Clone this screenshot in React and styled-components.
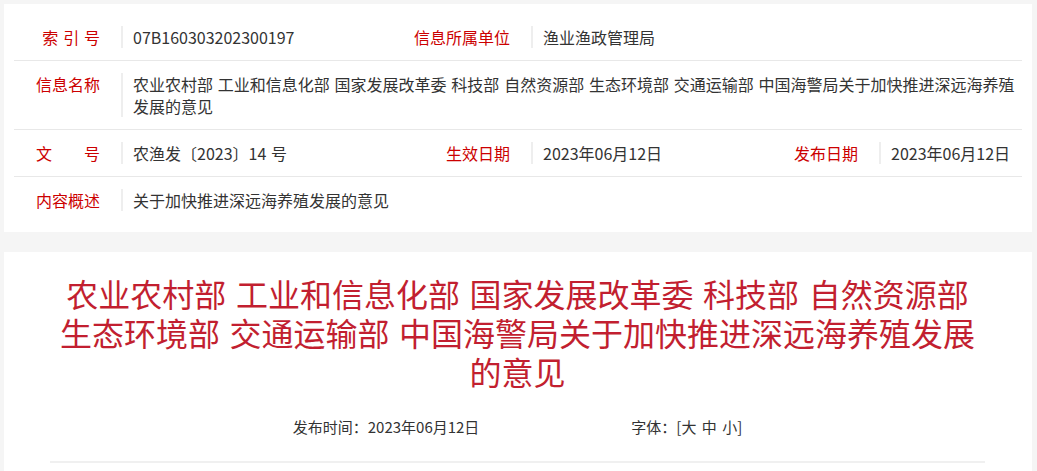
import React from 'react';
import styled, { createGlobalStyle } from 'styled-components';

const GlobalStyle = createGlobalStyle`
  body {
    margin: 0;
    background: #f5f5f5;
    font-family: 'Noto Sans CJK SC', 'Microsoft YaHei', sans-serif;
  }
`;

const Page = styled.div`
  padding: 4px 5px 0 4px;
  display: flex;
  flex-direction: column;
  gap: 20px;
`;

const InfoCard = styled.div`
  background: #fff;
  padding: 10px 10px 9px;
`;

const Row = styled.div`
  display: grid;
  grid-template-columns: 107px 290px 120px 228px 120px 1fr;
  align-items: start;
  padding: 12px 0;
  border-bottom: ${(props) => (props.last ? 'none' : '1px solid #e8e8e8')};
`;

const Label = styled.div`
  color: #cc0000;
  font-size: 16px;
  line-height: 22px;
  word-spacing: 0.08em;
  text-align: right;
  padding-right: 21px;
  white-space: pre;
`;

const Value = styled.div`
  color: #333;
  font-size: 16px;
  line-height: 22px;
  word-spacing: 0.075em;
  border-left: 2px solid #eee;
  padding-left: 10px;
  grid-column: ${(props) => (props.span ? `span ${props.span}` : 'auto')};
`;

const ArticleCard = styled.div`
  background: #fff;
  padding: 22px 47px 0 46px;
  min-height: 220px;
`;

const Title = styled.h1`
  margin: 0;
  color: #c21f30;
  font-size: 32px;
  font-weight: normal;
  line-height: 39px;
  word-spacing: 0.075em;
  text-align: center;
`;

const Meta = styled.div`
  display: flex;
  justify-content: center;
  gap: 152px;
  margin-top: 25px;
  padding-bottom: 23px;
  border-bottom: 2px solid #f0f0f0;
  color: #333;
  font-size: 15px;
  line-height: 22px;
`;

const SizeLinks = styled.span`
  word-spacing: 2px;
`;

const App = () => {
  return (
    <>
      <GlobalStyle />
      <Page>
        <InfoCard>
          <Row>
            <Label>索 引 号</Label>
            <Value>07B160303202300197</Value>
            <Label>信息所属单位</Label>
            <Value span={3}>渔业渔政管理局</Value>
          </Row>
          <Row>
            <Label>信息名称</Label>
            <Value span={5}>
              农业农村部 工业和信息化部 国家发展改革委 科技部 自然资源部 生态环境部 交通运输部 中国海警局关于加快推进深远海养殖发展的意见
            </Value>
          </Row>
          <Row>
            <Label>文　　号</Label>
            <Value>农渔发〔2023〕14 号</Value>
            <Label>生效日期</Label>
            <Value>2023年06月12日</Value>
            <Label>发布日期</Label>
            <Value>2023年06月12日</Value>
          </Row>
          <Row last>
            <Label>内容概述</Label>
            <Value span={5}>关于加快推进深远海养殖发展的意见</Value>
          </Row>
        </InfoCard>
        <ArticleCard>
          <Title>
            农业农村部 工业和信息化部 国家发展改革委 科技部 自然资源部 生态环境部 交通运输部 中国海警局关于加快推进深远海养殖发展的意见
          </Title>
          <Meta>
            <span>发布时间：2023年06月12日</span>
            <SizeLinks>字体：[大 中 小]</SizeLinks>
          </Meta>
        </ArticleCard>
      </Page>
    </>
  );
};

export default App;
